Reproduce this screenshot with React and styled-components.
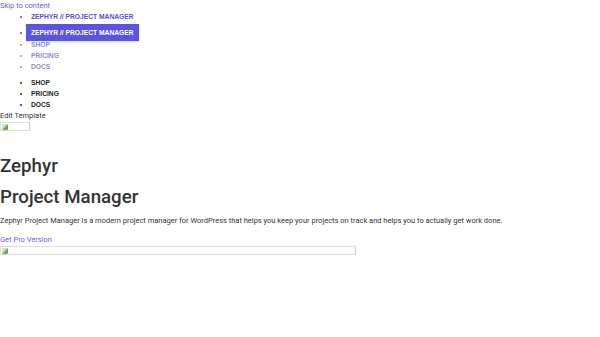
import React from "react";
import styled, { createGlobalStyle } from "styled-components";

const Global = createGlobalStyle`
  body {
    margin: 0;
    background: #fff;
    font-family: Roboto, "Liberation Sans", sans-serif;
    color: #333;
  }
`

const SkipLink = styled.a`
  display: block;
  font-size: 7.5px;
  line-height: 11px;
  color: #6b58e8;
  text-decoration: none;
`

const Menu = styled.ul`
  margin: 0;
  padding-left: 31px;
  font-family: "Liberation Sans", Arial, sans-serif;
  font-weight: bold;
  font-size: 6.7px;
  line-height: 11px;
  list-style: disc;
  margin-top: ${p => p.$top || 0}px;

  li::marker {
    font-size: 8px;
  }
`

const Item = styled.li`
  color: ${p => p.$color || "#222"};
`

const SubMenu = styled.ul`
  margin: 0;
  padding-left: 0;
  list-style: disc;
  margin-top: -2px;
`

const Highlight = styled.span`
  display: inline-block;
  position: relative;
  z-index: 1;
  margin-left: -5px;
  margin-top: 2px;
  padding: 3px 5px;
  background: #5a55e0;
  color: #fff;
  line-height: 11px;
  box-shadow: 0 1px 2px rgba(0, 0, 0, 0.15);
`

const EditLink = styled.div`
  font-size: 7.5px;
  line-height: 11px;
  color: #333;
`

const Broken = styled.div`
  width: ${p => p.$w}px;
  height: 9px;
  border: 1px solid #ddd;
  border-right-color: #ccc;
  box-sizing: border-box;
  position: relative;
  margin-top: 1px;

  &::before {
    content: "";
    position: absolute;
    left: 1px;
    top: 1px;
    width: 6px;
    height: 6px;
    background: linear-gradient(135deg, #cfe3c8 40%, #6aa35a 60%);
    border-radius: 1px;
  }
`

const Title = styled.h1`
  margin: 20px 0 0;
  font-size: 18.7px;
  font-weight: 500;
  line-height: 31px;
  color: #333;
`

const Text = styled.p`
  margin: 2px 0 0;
  font-size: 7.5px;
  line-height: 11px;
  color: #333;
`

const ProLink = styled.a`
  display: block;
  margin-top: 8px;
  font-size: 7.5px;
  line-height: 11px;
  color: #6b58e8;
  text-decoration: none;
`

export default function App() {
  return (
    <>
      <Global />
      <SkipLink href="#content">Skip to content</SkipLink>
      <Menu>
        <Item $color="#5b4fc8">ZEPHYR // PROJECT MANAGER</Item>
        <Item $color="#5b4fc8">
          <Highlight>ZEPHYR // PROJECT MANAGER</Highlight>
          <SubMenu>
            <Item $color="#8f8cc4">SHOP</Item>
            <Item $color="#8f8cc4">PRICING</Item>
            <Item $color="#8f8cc4">DOCS</Item>
          </SubMenu>
        </Item>
      </Menu>
      <Menu $top={5}>
        <Item>SHOP</Item>
        <Item>PRICING</Item>
        <Item>DOCS</Item>
      </Menu>
      <EditLink>Edit Template</EditLink>
      <Broken $w={30} />
      <Title>Zephyr<br />Project Manager</Title>
      <Text>
        Zephyr Project Manager is a modern project manager for WordPress that helps you keep your projects on track and helps you to actually get work done.
      </Text>
      <ProLink href="#pro">Get Pro Version</ProLink>
      <Broken $w={356} />
    </>
  );
}
